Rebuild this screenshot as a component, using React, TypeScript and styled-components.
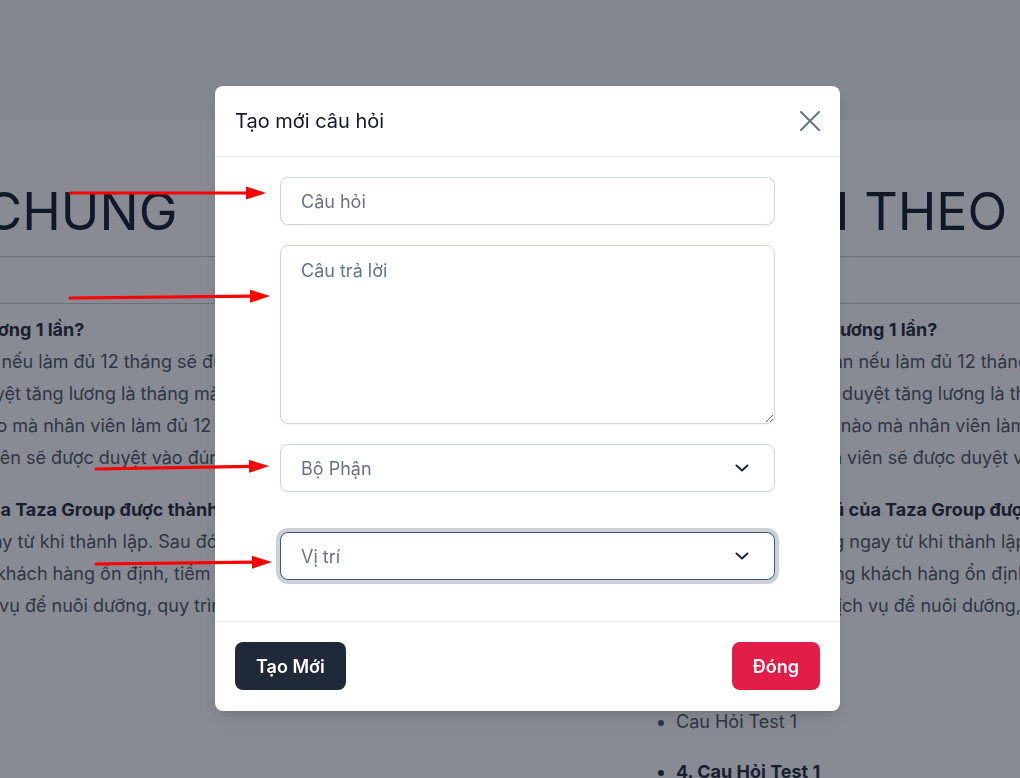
import React from "react";
import styled, { createGlobalStyle, css } from "styled-components";

const GlobalStyle = createGlobalStyle`
  html, body { margin: 0; padding: 0; }
  body {
    font-family: Inter, "Noto Sans", sans-serif;
    background: #ffffff;
    overflow: hidden;
    width: 1020px;
    height: 778px;
  }
  * { box-sizing: border-box; }
`;

const Page = styled.div`
  min-height: 778px;
  background: #ffffff;
`;

const TopBar = styled.header`
  height: 120px;
  background: #f3f4f6;
`;

const Columns = styled.main`
  display: flex;
  gap: 250px;
  margin-left: -248px;
`;

const Column = styled.section`
  flex: 0 0 630px;
`;

const Heading = styled.h1`
  margin: 0;
  padding: 66px 0 18px;
  font-size: 52px;
  line-height: 52px;
  font-weight: 400;
  color: #111827;
  white-space: nowrap;
  border-bottom: 1px solid #c4c6ca;
`;

const Band = styled.div`
  height: 47px;
  border-bottom: 1px solid #c4c6ca;
`;

const Content = styled.div`
  padding-top: 10px;
`;

const Entry = styled.div`
  margin-bottom: 20px;
`;

const Line = styled.div<{ $bold?: boolean }>`
  font-size: 18px;
  line-height: 32px;
  white-space: nowrap;
  color: ${(p) => (p.$bold ? "#1f2937" : "#4b5563")};
  font-weight: ${(p) => (p.$bold ? 700 : 400)};
`;

const List = styled.ul`
  margin: 34px 0 0;
  padding-left: 44px;
`;

const Item = styled.li<{ $bold?: boolean }>`
  font-size: 18px;
  line-height: 32px;
  margin-bottom: 18px;
  white-space: nowrap;
  color: ${(p) => (p.$bold ? "#1f2937" : "#4b5563")};
  font-weight: ${(p) => (p.$bold ? 700 : 400)};
`;

const Overlay = styled.div`
  position: fixed;
  inset: 0;
  background: rgba(17, 24, 39, 0.5);
  display: flex;
  justify-content: center;
  align-items: flex-start;
  padding: 86px 0 0 35px;
`;

const Dialog = styled.div`
  width: 625px;
  background: #ffffff;
  border-radius: 8px;
  box-shadow: 0 10px 15px -3px rgba(0, 0, 0, 0.1), 0 4px 6px -4px rgba(0, 0, 0, 0.1);
  overflow: hidden;
`;

const DialogHeader = styled.div`
  height: 71px;
  display: flex;
  align-items: center;
  justify-content: space-between;
  padding: 0 20px;
  border-bottom: 1px solid #e5e7eb;
`;

const Title = styled.h3`
  margin: 0;
  font-size: 20px;
  font-weight: 400;
  color: #111827;
`;

const CloseButton = styled.button`
  border: none;
  background: transparent;
  padding: 0;
  display: flex;
  cursor: pointer;
  color: #6b7280;
`;

const DialogBody = styled.div`
  padding: 20px 65px 41px;
  display: flex;
  flex-direction: column;
  gap: 20px;
`;

const fieldBase = css`
  width: 100%;
  border: 1px solid #d1d5db;
  border-radius: 8px;
  background: #ffffff;
  font-family: Inter, "Noto Sans", sans-serif;
  font-size: 18px;
  color: #111827;
  padding: 0 20px;
  box-shadow: 0 1px 2px rgba(0, 0, 0, 0.05);
  outline: none;
  &::placeholder {
    color: #6b7280;
  }
`;

const TextInput = styled.input`
  ${fieldBase};
  height: 48px;
`;

const TextArea = styled.textarea`
  ${fieldBase};
  display: block;
  height: 179px;
  padding: 11px 20px;
  line-height: 27px;
  resize: vertical;
`;

const SelectWrap = styled.div<{ $spaced?: boolean }>`
  position: relative;
  margin-top: ${(p) => (p.$spaced ? "20px" : "0")};
`;

const Select = styled.select<{ $focused?: boolean }>`
  ${fieldBase};
  display: block;
  height: 48px;
  appearance: none;
  color: #6b7280;
  padding-right: 48px;
  ${(p) =>
    p.$focused &&
    css`
      border-color: #40587c;
      box-shadow: 0 0 0 4px #cdd0d5;
    `}
`;

const Chevron = styled.svg`
  position: absolute;
  right: 26px;
  top: 50%;
  transform: translateY(-50%);
  pointer-events: none;
`;

const DialogFooter = styled.div`
  border-top: 1px solid #e5e7eb;
  padding: 20px 20px 21px;
  display: flex;
  justify-content: space-between;
`;

const Button = styled.button<{ $variant: "dark" | "danger" }>`
  height: 48px;
  padding: 0 21px;
  border: none;
  border-radius: 8px;
  font-family: Inter, "Noto Sans", sans-serif;
  font-size: 18px;
  font-weight: 600;
  color: #ffffff;
  cursor: pointer;
  background: ${(p) => (p.$variant === "dark" ? "#1f2937" : "#e11d48")};
`;

const Annotations = styled.svg`
  position: fixed;
  inset: 0;
  pointer-events: none;
`;

type Para = { q: string; lines: string[] };

const generalEntries: Para[] = [
  {
    q: "1. Bao lâu thì sẽ được tăng lương 1 lần?",
    lines: [
      "Theo quy định, từng cá nhân nếu làm đủ 12 tháng sẽ được",
      "xét tăng lương. Thời điểm duyệt tăng lương là tháng mà",
      "kể từ ngày vào làm, tháng nào mà nhân viên làm đủ 12 tháng",
      "thì từ tháng này trở đi nhân viên sẽ được duyệt vào đúng tháng đó.",
    ],
  },
  {
    q: "2. Các nguồn khách hàng của Taza Group được thành lập từ đâu?",
    lines: [
      "Công ty có nguồn khách, ngay từ khi thành lập. Sau đó",
      "công ty phát triển các mảng khách hàng ổn định, tiềm năng và",
      "đồng thời đầu tư cả các dịch vụ để nuôi dưỡng, quy trình chăm sóc.",
    ],
  },
];

const departmentEntries: Para[] = [
  {
    q: "1. Bao lâu sẽ được tăng lương 1 lần?",
    lines: [
      "Theo quy định thì cá nhân nếu làm đủ 12 tháng sẽ được",
      "xét tăng lương. Thời hạn duyệt tăng lương là tháng mà",
      "kể từ ngày đi làm, tháng nào mà nhân viên làm đủ 12 tháng",
      "thì tới tháng đó các nhân viên sẽ được duyệt vào đúng tháng đó.",
    ],
  },
  {
    q: "2. Nguồn khách hàng cũ của Taza Group được thành lập từ đâu?",
    lines: [
      "Chúng tôi có khách hàng ngay từ khi thành lập. Sau đó",
      "đã phát triển thêm ở mảng khách hàng ổn định, tiềm năng và",
      "đầu tư thêm vào nhiều dịch vụ để nuôi dưỡng, quy trình chăm sóc.",
    ],
  },
];

const FaqColumn: React.FC<{ title: string; entries: Para[]; children?: React.ReactNode }> = ({
  title,
  entries,
  children,
}) => (
  <Column>
    <Heading>{title}</Heading>
    <Band />
    <Content>
      {entries.map((e) => (
        <Entry key={e.q}>
          <Line $bold>{e.q}</Line>
          {e.lines.map((l) => (
            <Line key={l}>{l}</Line>
          ))}
        </Entry>
      ))}
      {children}
    </Content>
  </Column>
);

const Arrow: React.FC<{ x1: number; y1: number; x2: number; y2: number }> = ({ x1, y1, x2, y2 }) => {
  const dx = x2 - x1;
  const dy = y2 - y1;
  const len = Math.hypot(dx, dy);
  const ux = dx / len;
  const uy = dy / len;
  const headLen = 20;
  const half = 6.5;
  const bx = x2 - ux * headLen;
  const by = y2 - uy * headLen;
  const pts = `${x2},${y2} ${bx - uy * half},${by + ux * half} ${bx + uy * half},${by - ux * half}`;
  return (
    <g>
      <line x1={x1} y1={y1} x2={bx + ux * 2} y2={by + uy * 2} stroke="#ff0000" strokeWidth={3.2} strokeLinecap="round" />
      <polygon points={pts} fill="#ff0000" />
    </g>
  );
};

const ChevronIcon = () => (
  <Chevron
    width="14"
    height="8"
    viewBox="0 0 14 8"
    fill="none"
    stroke="#1f2937"
    strokeWidth="2"
    strokeLinecap="round"
    strokeLinejoin="round"
  >
    <path d="M1.5 1.5L7 6.5L12.5 1.5" />
  </Chevron>
);

export default function App() {
  return (
    <>
      <GlobalStyle />
      <Page>
        <TopBar />
        <Columns>
          <FaqColumn title="CÂU HỎI CHUNG" entries={generalEntries} />
          <FaqColumn title="CÂU HỎI THEO BỘ PHẬN" entries={departmentEntries}>
            <List>
              <Item $bold>3. Cau Hỏi Test 1</Item>
              <Item>Cau Hỏi Test 1</Item>
              <Item $bold>4. Cau Hỏi Test 1</Item>
            </List>
          </FaqColumn>
        </Columns>
      </Page>
      <Overlay>
        <Dialog>
          <DialogHeader>
            <Title>Tạo mới câu hỏi</Title>
            <CloseButton aria-label="Đóng">
              <svg width="20" height="20" viewBox="0 0 20 20" fill="none" stroke="currentColor" strokeWidth="2" strokeLinecap="round">
                <path d="M1 1L19 19M19 1L1 19" />
              </svg>
            </CloseButton>
          </DialogHeader>
          <DialogBody>
            <TextInput placeholder="Câu hỏi" />
            <TextArea placeholder="Câu trả lời" />
            <SelectWrap>
              <Select defaultValue="">
                <option value="" disabled>
                  Bộ Phận
                </option>
              </Select>
              <ChevronIcon />
            </SelectWrap>
            <SelectWrap $spaced>
              <Select defaultValue="" $focused>
                <option value="" disabled>
                  Vị trí
                </option>
              </Select>
              <ChevronIcon />
            </SelectWrap>
          </DialogBody>
          <DialogFooter>
            <Button $variant="dark">Tạo Mới</Button>
            <Button $variant="danger">Đóng</Button>
          </DialogFooter>
        </Dialog>
      </Overlay>
      <Annotations width="1020" height="778" viewBox="0 0 1020 778">
        <Arrow x1={70} y1={193} x2={266} y2={193} />
        <Arrow x1={70} y1={298} x2={270} y2={296} />
        <Arrow x1={96} y1={469} x2={269} y2={466} />
        <Arrow x1={96} y1={564} x2={272} y2={562} />
      </Annotations>
    </>
  );
}
